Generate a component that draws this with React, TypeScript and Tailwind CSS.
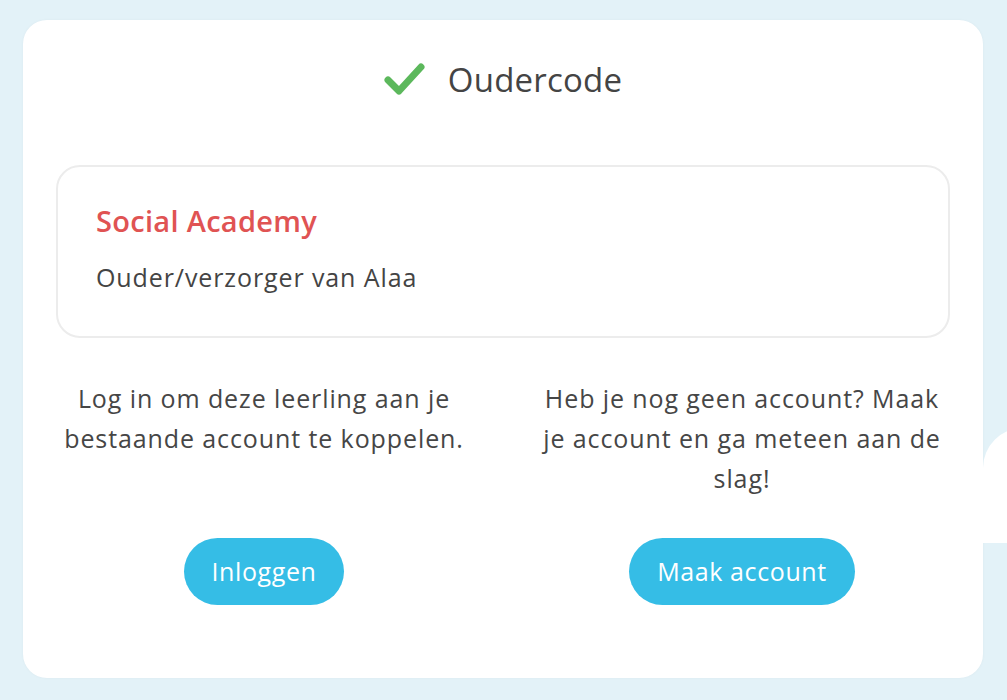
export default function App() {
  return (
    <div
      className="flex h-[700px] w-[1007px] items-start overflow-hidden bg-[#e3f2f8] pl-[23px] pt-[20px] text-[#464646]"
      style={{ fontFamily: '"Open Sans", "Noto Sans", sans-serif' }}
    >
      {/* Main card */}
      <div className="flex h-[658px] w-[960px] shrink-0 flex-col rounded-[24px] bg-white px-[33px] shadow-[0_0_3px_rgba(0,0,0,0.04)]">
        {/* Title */}
        <div className="flex h-[122px] items-center justify-center gap-[22px] pb-[2px]">
          <svg width="42" height="36" viewBox="0 0 42 36" className="mt-[-2px]">
            <path
              d="M4 19 L15 30 L37 6"
              fill="none"
              stroke="#5cb85c"
              strokeWidth="7"
              strokeLinecap="round"
              strokeLinejoin="round"
            />
          </svg>
          <h1 className="text-[33px] font-normal tracking-[0.2px] text-[#444]">Oudercode</h1>
        </div>

        {/* School box */}
        <div className="mt-[23px] flex h-[173px] flex-col rounded-[24px] border-2 border-[#ececec] px-[38px] pt-[34px]">
          <div className="text-[29px] font-semibold leading-[40px] tracking-[0.3px] text-[#e05353]">
            Social Academy
          </div>
          <div className="mt-[20px] text-[25px] leading-[32px] tracking-[0.9px] text-[#444]">
            Ouder/verzorger van Alaa
          </div>
        </div>

        {/* Options */}
        <div className="mt-[40px] grid grid-cols-2 gap-x-[62px]">
          <div className="flex flex-col items-center">
            <p className="h-[160px] text-center text-[25px] leading-[40px] tracking-[0.9px]">
              Log in om deze leerling aan je bestaande account te koppelen.
            </p>
            <button className="h-[67px] rounded-full bg-[#35bde6] px-[28px] text-[25px] font-medium tracking-[0.6px] text-white">
              Inloggen
            </button>
          </div>
          <div className="flex flex-col items-center">
            <p className="h-[160px] text-center text-[25px] leading-[40px] tracking-[0.9px]">
              Heb je nog geen account? Maak je account en ga meteen aan de slag!
            </p>
            <button className="h-[67px] rounded-full bg-[#35bde6] px-[28px] text-[25px] font-medium tracking-[0.6px] text-white">
              Maak account
            </button>
          </div>
        </div>
      </div>

      {/* Peeking side tab */}
      <div className="mt-[408px] h-[115px] w-[40px] shrink-0 rounded-tl-[40px] bg-white" />
    </div>
  );
}
